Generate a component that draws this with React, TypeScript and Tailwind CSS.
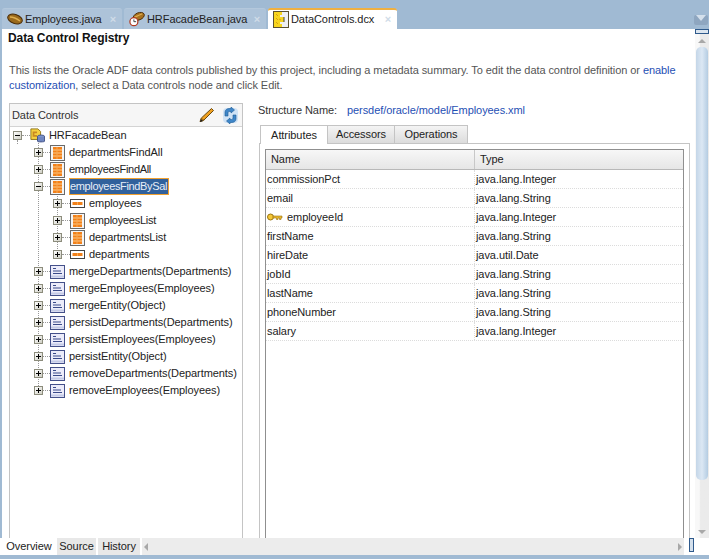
import type { ReactNode } from "react";

const font = "font-['Tahoma','Liberation_Sans',sans-serif]";

function Bean() {
  return (
    <svg width="16" height="14" viewBox="0 0 16 14">
      <ellipse cx="8" cy="7" rx="7.5" ry="4.5" transform="rotate(18 8 7)" fill="#9a6a1c" stroke="#4a2c08" />
      <path d="M3 5c3 0 6 1 10 4" stroke="#e0b050" strokeWidth="1.4" fill="none" />
    </svg>
  );
}

function ClockBean() {
  return (
    <svg width="18" height="18" viewBox="0 0 18 18">
      <ellipse cx="11" cy="6" rx="6.5" ry="4" transform="rotate(-22 11 6)" fill="#a8721f" stroke="#4a2c08" />
      <path d="M6 7c3-1 6-3 9-4" stroke="#e0b050" strokeWidth="1.2" fill="none" />
      <circle cx="5.5" cy="12" r="4.5" fill="#fff" stroke="#b03a20" strokeWidth="1.4" />
      <path d="M5.5 9.5V12H8" stroke="#333" fill="none" />
    </svg>
  );
}

function DcxIcon() {
  return (
    <svg width="16" height="17" viewBox="0 0 16 17">
      <rect x=".5" y=".5" width="15" height="16" fill="#eef0f4" stroke="#5a5030" />
      <path d="M1 1h8v3h-2v2h4v5H7v2h2v3H1z" fill="#f7d51e" />
      <path d="M3 3l2 2M3 7l2 2M3 11l2 2M6 8l2 1" stroke="#d8a010" />
      <path d="M11 6v5" stroke="#444" />
    </svg>
  );
}

function Pencil() {
  return (
    <svg width="16" height="16" viewBox="0 0 16 16">
      <path d="M12.5 1.5l2 2-10 10-3.5 1.2 1.2-3.5z" fill="#f0a020" stroke="#6a4a10" />
      <path d="M3 11.5l1.7 1.7" stroke="#6a4a10" />
      <path d="M1 15l1-3 2 2z" fill="#222" />
    </svg>
  );
}

function Refresh() {
  return (
    <svg width="17" height="17" viewBox="0 0 17 17">
      <rect x="1" y="1" width="15" height="15" rx="4" fill="#cfe2f5" />
      <path d="M3 9V5c0-2 2-3.500 4-3.500h2V0l3.500 3L9 6V4.500H7.500C6.500 4.500 6 5 6 6v3z" fill="#3f86c8" stroke="#1d5a96" strokeWidth="0.6" />
      <path d="M14 8v4c0 2-2 3.500-4 3.500H8V17l-3.500-3L8 11v1.500h1.500c1 0 1.500-.5 1.500-1.500V8z" fill="#3f86c8" stroke="#1d5a96" strokeWidth="0.6" />
    </svg>
  );
}

function RootIcon() {
  return (
    <svg width="17" height="17" viewBox="0 0 17 17">
      <path d="M1 1h8l3 3v9H1z" fill="#f5d040" stroke="#8a7010" />
      <path d="M3 4h5v2H5v2h3v2H3z" fill="#c88a20" />
      <ellipse cx="12.500" cy="9.500" rx="4" ry="1.500" fill="#8ea2d0" stroke="#3a4a80" />
      <path d="M8.500 9.500v5.500c0 1 8 1 8 0V9.500" fill="#6f86c0" stroke="#3a4a80" />
    </svg>
  );
}

function CollectionIcon() {
  return (
    <svg width="15" height="16" viewBox="0 0 15 16">
      <rect x=".5" y=".5" width="14" height="15" fill="#f4f4f4" stroke="#6a6a6a" />
      <rect x="3" y="2" width="9" height="12" fill="#f2811a" />
      <path d="M3 5h9M3 8h9M3 11h9" stroke="#fbc98a" />
      <path d="M7 2v12" stroke="#f9a850" />
    </svg>
  );
}

function RowIcon() {
  return (
    <svg width="15" height="9" viewBox="0 0 15 9">
      <rect x=".5" y=".5" width="14" height="8" fill="#fff" stroke="#444" />
      <rect x="2.500" y="3" width="10" height="3" fill="#f2811a" />
      <path d="M7.500 3v3" stroke="#f9a850" />
    </svg>
  );
}

function MethodIcon() {
  return (
    <svg width="15" height="14" viewBox="0 0 15 14">
      <rect x=".5" y=".5" width="14" height="13" fill="#ececfa" stroke="#44508a" />
      <path d="M3 3.500h3M3 6h8M3 8.500h9" stroke="#3a4a8a" />
      <path d="M1 11.500h13" stroke="#c4cae6" strokeWidth="2" />
    </svg>
  );
}

function KeyIcon() {
  return (
    <svg width="16" height="8" viewBox="0 0 16 8">
      <circle cx="3.500" cy="4" r="3" fill="#f5c838" stroke="#9a7410" />
      <path d="M6 3h9v2h-1v1.500h-1.500V5H11v1.500H9.500V5H6z" fill="#e8b830" stroke="#9a7410" strokeWidth=".6" />
    </svg>
  );
}

function Expander({ open }: { open?: boolean }) {
  return (
    <span className="relative flex h-[9px] w-[9px] shrink-0 items-center justify-center border border-[#8c8c7c] bg-gradient-to-br from-white to-[#cfcfc4]">
      <span className="h-px w-[5px] bg-black" />
      {!open && <span className="absolute h-[5px] w-px bg-black" />}
    </span>
  );
}

type Node = { label: string; level: number; icon: ReactNode; open?: boolean; selected?: boolean; tight?: string };

const tree: Node[] = [
  { label: "HRFacadeBean", level: 0, icon: <RootIcon />, open: true },
  { label: "departmentsFindAll", level: 1, icon: <CollectionIcon /> },
  { label: "employeesFindAll", level: 1, icon: <CollectionIcon />, tight: "tracking-[-0.3px]" },
  { label: "employeesFindBySal", level: 1, icon: <CollectionIcon />, open: true, selected: true, tight: "tracking-[-0.35px]" },
  { label: "employees", level: 2, icon: <RowIcon /> },
  { label: "employeesList", level: 2, icon: <CollectionIcon />, tight: "tracking-[-0.25px]" },
  { label: "departmentsList", level: 2, icon: <CollectionIcon /> },
  { label: "departments", level: 2, icon: <RowIcon /> },
  { label: "mergeDepartments(Departments)", level: 1, icon: <MethodIcon /> },
  { label: "mergeEmployees(Employees)", level: 1, icon: <MethodIcon /> },
  { label: "mergeEntity(Object)", level: 1, icon: <MethodIcon /> },
  { label: "persistDepartments(Departments)", level: 1, icon: <MethodIcon /> },
  { label: "persistEmployees(Employees)", level: 1, icon: <MethodIcon /> },
  { label: "persistEntity(Object)", level: 1, icon: <MethodIcon /> },
  { label: "removeDepartments(Departments)", level: 1, icon: <MethodIcon /> },
  { label: "removeEmployees(Employees)", level: 1, icon: <MethodIcon /> },
];

const attributes = [
  ["commissionPct", "java.lang.Integer"],
  ["email", "java.lang.String"],
  ["employeeId", "java.lang.Integer"],
  ["firstName", "java.lang.String"],
  ["hireDate", "java.util.Date"],
  ["jobId", "java.lang.String"],
  ["lastName", "java.lang.String"],
  ["phoneNumber", "java.lang.String"],
  ["salary", "java.lang.Integer"],
];

function TreeRow({ node }: { node: Node }) {
  const indent = node.level === 0 ? "pl-[3px]" : node.level === 1 ? "pl-[24px]" : "pl-[43px]";
  const link = node.level === 1 ? "w-[7px]" : "w-[8px]";
  return (
    <div className={`relative flex h-[17px] items-center ${indent}`}>
      <Expander open={node.open} />
      <span className={`${link} border-t border-dotted border-[#999]`} />
      <span className="flex w-[15px] shrink-0 items-center">{node.icon}</span>
      <span
        className={
          node.selected
            ? `ml-[4px] flex h-[17px] w-[100px] items-center whitespace-nowrap border border-[#f0a030] bg-[#31619c] text-[#e8eef8] ${node.tight}`
            : `ml-[4px] text-[#222] ${node.tight ?? ""}`
        }
      >
        {node.label}
      </span>
    </div>
  );
}

function EditorTab({ label, icon, active, width }: { label: string; icon: ReactNode; active?: boolean; width: string }) {
  return (
    <div
      className={`flex h-[21px] items-center gap-[2px] rounded-t-[3px] pl-[5px] text-[#222] ${width} ${
        active ? "border-t-2 border-[#f0b040] bg-white" : "border-t border-[#b4c8dc] bg-[#adc3d9]"
      }`}
    >
      <span className="flex w-[16px] shrink-0 justify-center">{icon}</span>
      <span className="flex-1 whitespace-nowrap">{label}</span>
      <span className="mr-[6px] text-[11px] font-bold leading-none text-[#d0dce8]">×</span>
    </div>
  );
}

export default function App() {
  return (
    <div className={`flex h-[559px] w-[709px] flex-col overflow-hidden bg-[#a0bad3] text-[11px] tracking-[-0.07px] ${font}`}>
      {/* Вкладки редактора */}
      <div className="flex h-[29px] shrink-0 items-end pl-[2px]">
        <div className="flex flex-1 gap-[2px]">
          <EditorTab label="Employees.java" icon={<Bean />} width="w-[120px]" />
          <EditorTab label="HRFacadeBean.java" icon={<ClockBean />} width="w-[142px]" />
          <EditorTab label="DataControls.dcx" icon={<DcxIcon />} active width="w-[129px]" />
        </div>
        <div className="mb-[4px] mr-px flex h-[10px] w-[14px] items-start justify-center rounded-[2px] bg-[#8ea6c0]">
          <span className="h-0 w-0 border-x-[5px] border-t-[6px] border-x-transparent border-t-[#d4e0ec]" />
        </div>
      </div>

      <div className="flex min-h-0 flex-1">
        <div className="flex min-w-0 flex-1 flex-col">
          {/* Содержимое */}
          <div className="ml-[2px] flex min-h-0 flex-1 flex-col bg-white pl-[7px] pr-[5px]">
            <h1 className="mt-[2px] h-[15px] whitespace-nowrap text-[12px] font-bold leading-[15px] tracking-[-0.1px] text-[#111] -ml-px">Data Control Registry</h1>
            <p className="mt-[17px] h-[30px] whitespace-nowrap leading-[15px] text-[#555]">
              This lists the Oracle ADF data controls published by this project, including a metadata summary. To edit the data control definition or{" "}
              <span className="text-[#1f4fb4]">enable</span>
              <br />
              <span className="text-[#1f4fb4]">customization</span>, select a Data controls node and click Edit.
            </p>

            <div className="mt-[10px] flex min-h-0 flex-1 gap-[16px]">
              {/* Дерево */}
              <div className="flex w-[234px] shrink-0 flex-col border-x border-t border-[#c4c4c4]">
                <div className="flex h-[23px] shrink-0 items-center justify-between border-b border-[#d4d4d4] bg-[#f6f6f6] pl-[2px] pr-[3px] text-[#333]">
                  <span>Data Controls</span>
                  <span className="flex items-center gap-[7px]">
                    <Pencil />
                    <Refresh />
                  </span>
                </div>
                <div className="relative flex-1">
                  <span className="absolute left-[7px] top-[13px] h-[4px] border-l border-dotted border-[#999]" />
                  <span className="absolute left-[28px] top-[13px] h-[246px] border-l border-dotted border-[#999]" />
                  <span className="absolute left-[47px] top-[60px] h-[68px] border-l border-dotted border-[#999]" />
                  {tree.map((node) => (
                    <TreeRow key={node.label} node={node} />
                  ))}
                </div>
              </div>

              {/* Структура */}
              <div className="flex min-w-0 flex-1 flex-col">
                <div className="-ml-px flex h-[15px] items-center text-[#333]">
                  <span className="w-[89px]">Structure Name:</span>
                  <span className="text-[#1f4fb4]">persdef/oracle/model/Employees.xml</span>
                </div>
                <div className="mt-[7px] flex h-[18px] shrink-0 pl-px text-[#222]">
                  <div className="z-10 flex h-[19px] w-[68px] items-center justify-center border-x border-t border-[#c4c4c4] bg-white">Attributes</div>
                  <div className="flex w-[67px] items-center justify-center border-r border-t border-[#c4c4c4] bg-gradient-to-b from-[#f4f4f4] to-[#dcdcdc]">Accessors</div>
                  <div className="flex w-[73px] items-center justify-center border-r border-t border-[#c4c4c4] bg-gradient-to-b from-[#f4f4f4] to-[#dcdcdc]">Operations</div>
                </div>
                <div className="flex min-h-0 flex-1 border-x border-t border-[#c4c4c4] px-[5px] pt-[5px]">
                  <div className="flex-1 border-x border-t border-[#8f8f8f]">
                    <div className="grid h-[20px] grid-cols-[209px_1fr] items-center border-b border-[#b8b8b8] bg-gradient-to-b from-[#f7f7f7] to-[#e6e6e6] text-[#222]">
                      <span className="border-r border-[#c8c8c8] pl-[5px] leading-[19px]">Name</span>
                      <span className="pl-[5px]">Type</span>
                    </div>
                    {attributes.map(([name, type]) => (
                      <div key={name} className="grid h-[19px] grid-cols-[209px_1fr] items-center border-b border-dotted border-[#dcdcdc] text-[#222]">
                        <span className="flex h-full items-center border-r border-dotted border-[#dcdcdc] pl-px">
                          {name === "employeeId" && (
                            <span className="mr-[4px] flex">
                              <KeyIcon />
                            </span>
                          )}
                          {name}
                        </span>
                        <span className="pl-px">{type}</span>
                      </div>
                    ))}
                  </div>
                </div>
              </div>
            </div>
          </div>

          {/* Нижние вкладки */}
          <div className="flex h-[17px] shrink-0 items-stretch bg-white pl-[2px] text-[#222]">
            <div className="ml-px flex w-[52px] items-center justify-center rounded-b-[2px] bg-white">Overview</div>
            <div className="ml-[2px] flex w-[39px] items-center justify-center bg-[#e8e8e8]">Source</div>
            <div className="ml-[2px] flex w-[42px] items-center justify-center bg-[#e8e8e8]">History</div>
            <div className="ml-[2px] flex flex-1 items-center justify-between bg-[#ececec] px-[2px]">
              <span className="h-0 w-0 border-y-[4px] border-r-[4px] border-y-transparent border-r-[#a8a8a8]" />
              <span className="h-0 w-0 border-y-[4px] border-l-[4px] border-y-transparent border-l-[#a8a8a8]" />
            </div>
            <div className="ml-[5px] mb-[3px] mr-px w-[5px] border border-[#2f5a8c] bg-[#d4e0ec]" />
          </div>
          <div className="h-[4px] shrink-0" />
        </div>

        {/* Вертикальный скролл */}
        <div className="flex w-[14px] shrink-0 flex-col">
          <div className="flex min-h-0 flex-1 flex-col bg-gradient-to-r from-[#f8f8f8] from-30% to-[#ebebeb] to-40%">
            <div className="h-[5px] shrink-0 border border-[#2f5a8c] bg-[#dce6f0]" />
            <div className="flex h-[13px] shrink-0 items-center justify-center">
              <span className="h-0 w-0 border-x-[4px] border-b-[4px] border-x-transparent border-b-[#a8a8a8]" />
            </div>
            <div className="mx-px h-[433px] shrink-0 rounded-[5px] bg-gradient-to-r from-[#c4d6e8] via-[#dce8f4] to-[#b4cce2]" />
            <div className="mt-auto flex h-[13px] shrink-0 items-center justify-center">
              <span className="h-0 w-0 border-x-[4px] border-t-[4px] border-x-transparent border-t-[#a8a8a8]" />
            </div>
          </div>
          <div className="h-[17px] shrink-0 bg-white" />
          <div className="h-[4px] shrink-0" />
        </div>
      </div>
    </div>
  );
}
